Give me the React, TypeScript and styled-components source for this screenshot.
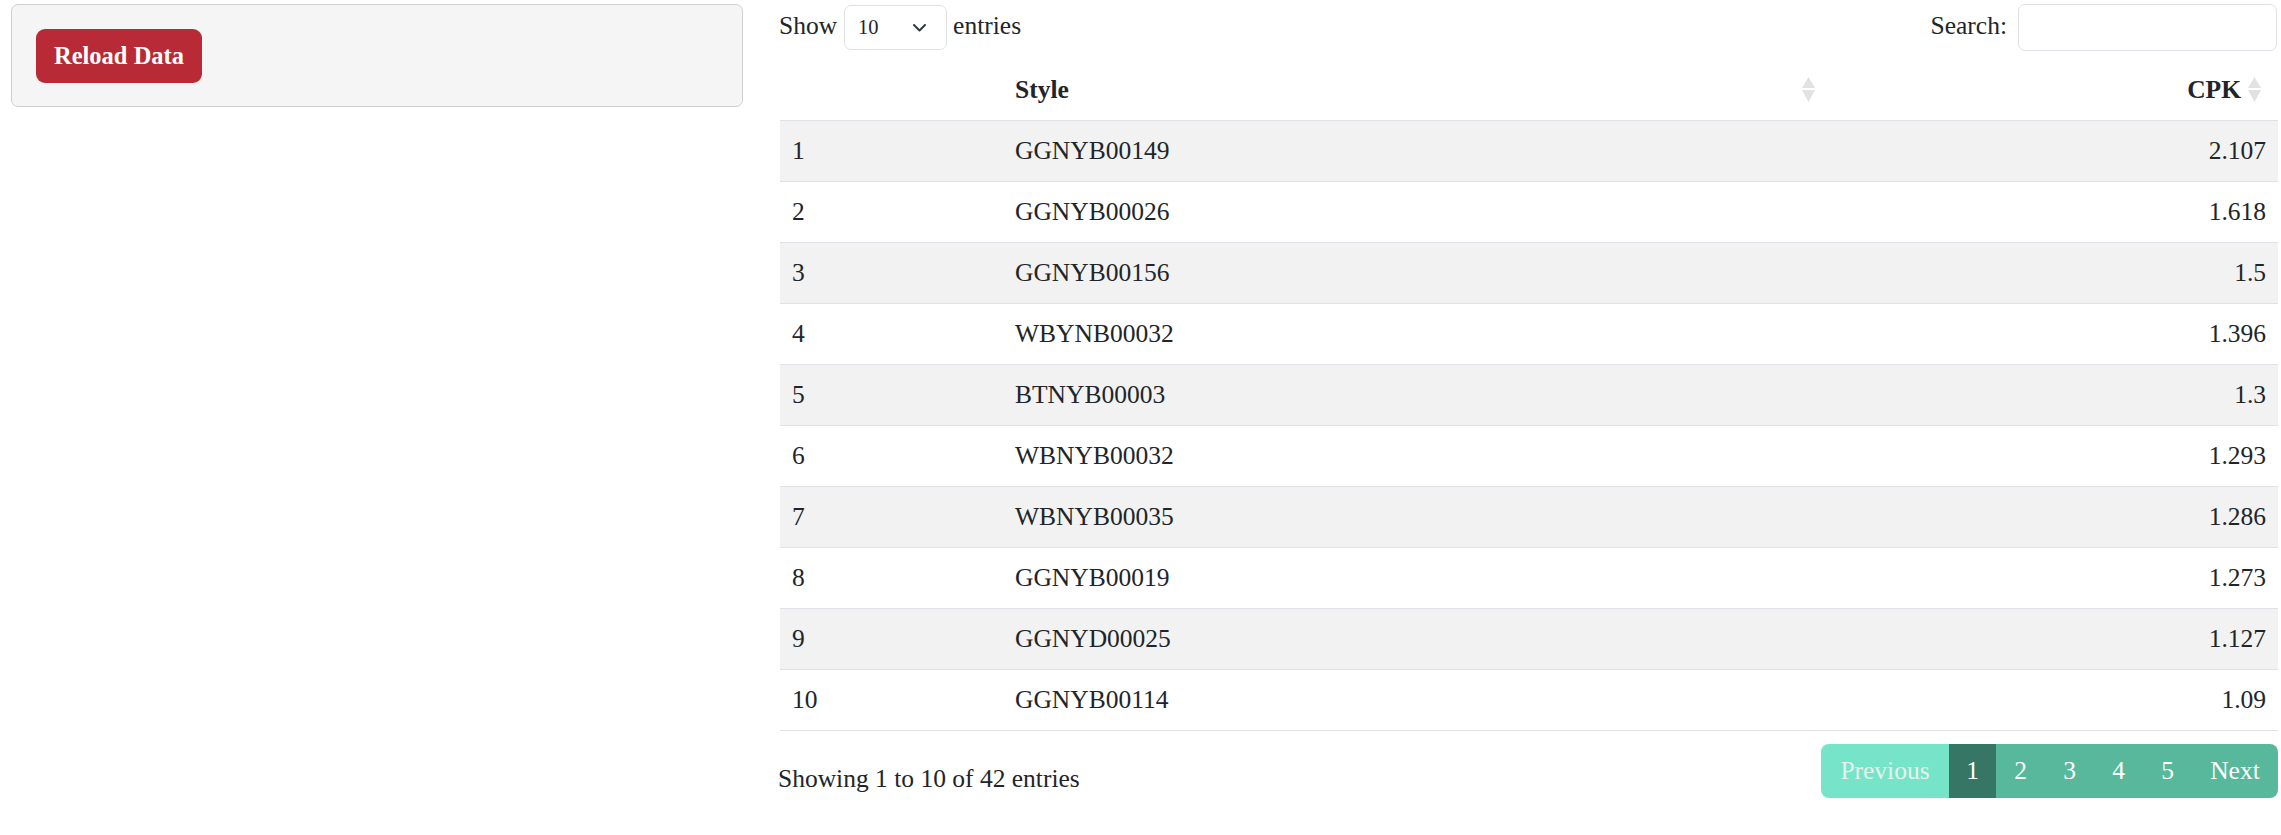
import React from "react";
import styled, { createGlobalStyle } from "styled-components";

const Global = createGlobalStyle`
  html, body { margin: 0; padding: 0; background: #ffffff; }
  body {
    font-family: "Liberation Serif", "Times New Roman", serif;
    color: #212529;
    font-size: 25.5px;
  }
  * { box-sizing: border-box; }
`;

const Page = styled.div`
  display: grid;
  grid-template-columns: 732px 1498px;
  column-gap: 37px;
  padding: 4px 3px 0 11px;
  align-items: start;
`;

const Well = styled.div`
  background: #f5f5f5;
  border: 1px solid #cfcfcf;
  border-radius: 7px;
  height: 103px;
  padding: 24px 0 0 24px;
`;

const ReloadButton = styled.button`
  display: inline-flex;
  align-items: center;
  justify-content: center;
  width: 166px;
  height: 54px;
  border: none;
  border-radius: 9px;
  background: #b82b36;
  color: #ffffff;
  font-family: "Liberation Serif", "Times New Roman", serif;
  font-weight: 700;
  font-size: 24.5px;
  padding: 0;
  cursor: pointer;
`;

const Main = styled.div`
  display: flex;
  flex-direction: column;
`;

const Controls = styled.div`
  display: flex;
  justify-content: space-between;
  align-items: center;
  height: 47px;
  margin-bottom: 8px;
`;

const ControlLabel = styled.label`
  display: flex;
  align-items: center;
  gap: 7px;
  line-height: 1;
  margin-left: -1px;
`;

const LabelText = styled.span`
  margin-top: -3px;
`;

const SelectBox = styled.div`
  display: flex;
  align-items: center;
  justify-content: space-between;
  width: 103px;
  height: 45px;
  margin-right: -1px;
  border: 1px solid #dee2e6;
  border-radius: 7px;
  padding: 0 20px 0 13px;
  font-size: 20.5px;
  background: #fff;
`;

const SearchInput = styled.input`
  width: 259px;
  height: 47px;
  border: 1px solid #dee2e6;
  border-radius: 7px;
  margin-left: 4px;
  margin-right: 1px;
  background: #fff;
`;

const Table = styled.table`
  width: 1498px;
  border-collapse: collapse;
  table-layout: fixed;
`;

const Th = styled.th<{ $align?: "left" | "right"; $pr?: number }>`
  position: relative;
  text-align: ${(p) => p.$align ?? "left"};
  font-weight: 700;
  height: 61px;
  padding: 0 ${(p) => p.$pr ?? 12}px 0 12px;
  border-bottom: 1px solid #dee2e6;
  line-height: 37px;
`;

const SortIcon = styled.svg`
  position: absolute;
  right: 17px;
  top: 18px;
`;

const Row = styled.tr<{ $striped: boolean }>`
  background: ${(p) => (p.$striped ? "#f2f2f2" : "#ffffff")};
`;

const Td = styled.td<{ $align?: "left" | "right" }>`
  text-align: ${(p) => p.$align ?? "left"};
  height: 61px;
  padding: 0 12px;
  border-bottom: 1px solid #dee2e6;
  line-height: 37px;
  white-space: nowrap;
`;

const Footer = styled.div`
  display: flex;
  justify-content: space-between;
  align-items: flex-start;
`;

const Info = styled.div`
  padding-top: 29px;
  line-height: 37px;
  margin-left: -2px;
`;

const Pagination = styled.div`
  display: flex;
  margin-top: 13px;
  border-radius: 8px;
  overflow: hidden;
  height: 54px;
`;

type PageKind = "disabled" | "active" | "normal";

const PageButton = styled.div<{ $kind: PageKind; $w: number }>`
  display: flex;
  align-items: center;
  justify-content: center;
  width: ${(p) => p.$w}px;
  background: ${(p) =>
    p.$kind === "disabled" ? "#76e4c8" : p.$kind === "active" ? "#357664" : "#58b89b"};
  color: ${(p) => (p.$kind === "disabled" ? "#e8f2ec" : "#ffffff")};
  font-size: 25.5px;
`;

const Sort = () => (
  <SortIcon width="13" height="25" viewBox="0 0 13 25">
    <polygon points="6.5,0 13,11 0,11" fill="#e2e2e2" />
    <polygon points="0,13 13,13 6.5,25" fill="#e2e2e2" />
  </SortIcon>
);

const data: [string, string][] = [
  ["GGNYB00149", "2.107"],
  ["GGNYB00026", "1.618"],
  ["GGNYB00156", "1.5"],
  ["WBYNB00032", "1.396"],
  ["BTNYB00003", "1.3"],
  ["WBNYB00032", "1.293"],
  ["WBNYB00035", "1.286"],
  ["GGNYB00019", "1.273"],
  ["GGNYD00025", "1.127"],
  ["GGNYB00114", "1.09"],
];

export default function App() {
  return (
    <>
      <Global />
      <Page>
        <Well>
          <ReloadButton>Reload Data</ReloadButton>
        </Well>
        <Main>
          <Controls>
            <ControlLabel>
              <LabelText>Show</LabelText>
              <SelectBox>
                <span>10</span>
                <svg width="13" height="8" viewBox="0 0 13 8">
                  <polyline
                    points="1,1 6.5,6.5 12,1"
                    fill="none"
                    stroke="#343a40"
                    strokeWidth="2"
                    strokeLinecap="round"
                    strokeLinejoin="round"
                  />
                </svg>
              </SelectBox>
              <LabelText>entries</LabelText>
            </ControlLabel>
            <ControlLabel>
              <LabelText>Search:</LabelText>
              <SearchInput type="text" />
            </ControlLabel>
          </Controls>
          <Table>
            <colgroup>
              <col style={{ width: 223 }} />
              <col style={{ width: 829 }} />
              <col style={{ width: 446 }} />
            </colgroup>
            <thead>
              <tr>
                <Th />
                <Th>
                  Style
                  <Sort />
                </Th>
                <Th $align="right" $pr={37}>
                  CPK
                  <Sort />
                </Th>
              </tr>
            </thead>
            <tbody>
              {data.map(([style, cpk], i) => (
                <Row key={style} $striped={i % 2 === 0}>
                  <Td>{i + 1}</Td>
                  <Td>{style}</Td>
                  <Td $align="right">{cpk}</Td>
                </Row>
              ))}
            </tbody>
          </Table>
          <Footer>
            <Info>Showing 1 to 10 of 42 entries</Info>
            <Pagination>
              <PageButton $kind="disabled" $w={128}>Previous</PageButton>
              <PageButton $kind="active" $w={47}>1</PageButton>
              <PageButton $kind="normal" $w={49}>2</PageButton>
              <PageButton $kind="normal" $w={49}>3</PageButton>
              <PageButton $kind="normal" $w={49}>4</PageButton>
              <PageButton $kind="normal" $w={49}>5</PageButton>
              <PageButton $kind="normal" $w={86}>Next</PageButton>
            </Pagination>
          </Footer>
        </Main>
      </Page>
    </>
  );
}
